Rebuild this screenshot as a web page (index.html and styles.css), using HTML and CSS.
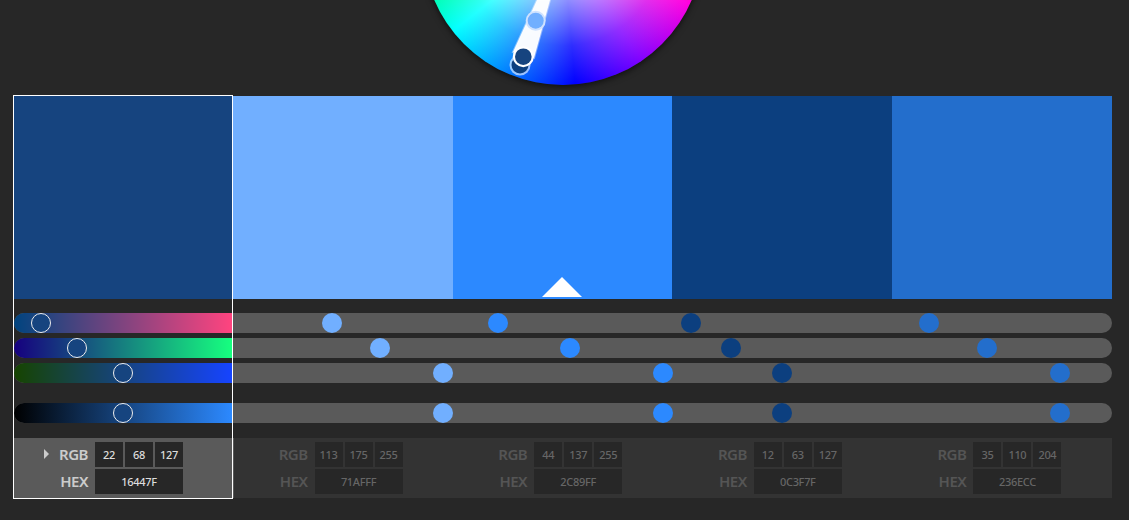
FILE: index.html
```html
<!DOCTYPE html>
<html lang="en">
<head>
    <meta charset="UTF-8">
    <meta name="viewport" content="width=device-width, initial-scale=1.0">
    <title>Color Wheel</title>
    <link rel="stylesheet" href="styles.css">
</head>
<body>
    <div class="wheel-stage">
        <div class="wheel"></div>
        <svg class="wheel-marks" width="1129" height="96" viewBox="0 0 1129 96">
            <polygon points="537,0 550,0 534,58 513,52" fill="#fff" fill-opacity="0.97" stroke="#fff" stroke-opacity="0.4" stroke-width="2"/>
            <circle cx="535.7" cy="20.7" r="10" fill="#cfe2ff"/>
            <circle cx="535.7" cy="20.7" r="8" fill="#71afff"/>
            <circle cx="520" cy="65" r="10.5" fill="#fff" fill-opacity="0.6"/>
            <circle cx="520" cy="65" r="8.5" fill="#0c3f7f"/>
            <circle cx="523.3" cy="56.7" r="10.5" fill="#fff"/>
            <circle cx="523.3" cy="56.7" r="8.3" fill="#16447f"/>
        </svg>
    </div>

    <div class="harmony">
        <div class="selection"></div>

        <div class="swatches">
            <div class="swatch c1"></div>
            <div class="swatch c2"></div>
            <div class="swatch c3"><span class="base-arrow"></span></div>
            <div class="swatch c4"></div>
            <div class="swatch c5"></div>
        </div>

        <div class="sliders">
            <div class="track">
                <div class="ramp ramp-r"></div>
                <span class="dot c1 thumb" style="left: 27px"></span>
                <span class="dot c2" style="left: 318px"></span>
                <span class="dot c3" style="left: 484px"></span>
                <span class="dot c4" style="left: 677px"></span>
                <span class="dot c5" style="left: 915px"></span>
            </div>
            <div class="track">
                <div class="ramp ramp-g"></div>
                <span class="dot c1 thumb" style="left: 63px"></span>
                <span class="dot c2" style="left: 366px"></span>
                <span class="dot c3" style="left: 556px"></span>
                <span class="dot c4" style="left: 717px"></span>
                <span class="dot c5" style="left: 973px"></span>
            </div>
            <div class="track">
                <div class="ramp ramp-b"></div>
                <span class="dot c1 thumb" style="left: 109px"></span>
                <span class="dot c2" style="left: 429px"></span>
                <span class="dot c3" style="left: 649px"></span>
                <span class="dot c4" style="left: 768px"></span>
                <span class="dot c5" style="left: 1046px"></span>
            </div>
            <div class="track track-brightness">
                <div class="ramp ramp-v"></div>
                <span class="dot c1 thumb" style="left: 109px"></span>
                <span class="dot c2" style="left: 429px"></span>
                <span class="dot c3" style="left: 649px"></span>
                <span class="dot c4" style="left: 768px"></span>
                <span class="dot c5" style="left: 1046px"></span>
            </div>
        </div>

        <div class="panels">
            <div class="panel active">
                <span class="label"><i class="caret"></i>RGB</span>
                <span class="value">22</span><span class="value">68</span><span class="value">127</span>
                <span class="label">HEX</span>
                <span class="value hex">16447F</span>
            </div>
            <div class="panel">
                <span class="label">RGB</span>
                <span class="value">113</span><span class="value">175</span><span class="value">255</span>
                <span class="label">HEX</span>
                <span class="value hex">71AFFF</span>
            </div>
            <div class="panel">
                <span class="label">RGB</span>
                <span class="value">44</span><span class="value">137</span><span class="value">255</span>
                <span class="label">HEX</span>
                <span class="value hex">2C89FF</span>
            </div>
            <div class="panel">
                <span class="label">RGB</span>
                <span class="value">12</span><span class="value">63</span><span class="value">127</span>
                <span class="label">HEX</span>
                <span class="value hex">0C3F7F</span>
            </div>
            <div class="panel">
                <span class="label">RGB</span>
                <span class="value">35</span><span class="value">110</span><span class="value">204</span>
                <span class="label">HEX</span>
                <span class="value hex">236ECC</span>
            </div>
        </div>
    </div>
</body>
</html>
```

FILE: styles.css
```css
html, body {
    height: 100%;
}
body {
    background: #272727;
    color: #ccc;
    font-family: "Noto Sans", "Open Sans", sans-serif;
    margin: 0;
    overflow: hidden;
}

/* colour wheel, cut off by the top of the window */
.wheel-stage {
    height: 96px;
    overflow: hidden;
    position: relative;
}
.wheel {
    background:
        radial-gradient(circle closest-side, #fff 0%, rgba(255, 255, 255, 0.55) 40%, rgba(255, 255, 255, 0.18) 72%, rgba(255, 255, 255, 0) 100%),
        conic-gradient(#ffff00 0deg, #ff8000 40deg, #ff0000 80deg, #ff00e0 115deg, #8000ff 146deg, #0000ff 175deg, #0080ff 204deg, #00ffff 232deg, #00ffc0 245deg, #00ff80 262deg, #00ff00 290deg, #80ff00 325deg, #ffff00 360deg);
    border-radius: 50%;
    box-shadow: 0 2px 6px rgba(0, 0, 0, 0.6);
    height: 280px;
    left: 422.5px;
    position: absolute;
    top: -195px;
    width: 280px;
}
.wheel-marks {
    left: 0;
    position: absolute;
    top: 0;
}

.harmony {
    margin-left: 14px;
    position: relative;
    width: 1098px;
}
.selection {
    border: 1px solid #fff;
    height: 402px;
    left: -1px;
    pointer-events: none;
    position: absolute;
    top: -1px;
    width: 218px;
    z-index: 2;
}

.c1 { background: #16447f; }
.c2 { background: #71afff; }
.c3 { background: #2c89ff; }
.c4 { background: #0c3f7f; }
.c5 { background: #236ecc; }

.swatches {
    display: grid;
    grid-template-columns: 219px 220px 219px 220px 220px;
    height: 203px;
}
.swatch {
    align-items: flex-end;
    display: flex;
    justify-content: center;
}
.base-arrow {
    border-bottom: 20px solid #fff;
    border-left: 20px solid transparent;
    border-right: 20px solid transparent;
    height: 0;
    margin-bottom: 2px;
    margin-right: 1px;
    width: 0;
}

.sliders {
    display: flex;
    flex-direction: column;
    gap: 5px;
    margin-top: 14px;
}
.track {
    background: #5a5a5a;
    border-radius: 10px;
    height: 20px;
    position: relative;
}
.track-brightness {
    margin-top: 15px;
}
.ramp {
    border-radius: 10px 0 0 10px;
    height: 100%;
    width: 218px;
}
.ramp-r { background: linear-gradient(to right, #00447f, #ff447f); }
.ramp-g { background: linear-gradient(to right, #16007f, #16ff7f); }
.ramp-b { background: linear-gradient(to right, #164400, #1644ff); }
.ramp-v { background: linear-gradient(to right, #000, #2c89ff); }
.dot {
    border-radius: 50%;
    height: 20px;
    margin-left: -10px;
    position: absolute;
    top: 0;
    width: 20px;
}
.thumb {
    border: 1px solid #eee;
    box-sizing: border-box;
}

.panels {
    background: #333;
    display: grid;
    grid-template-columns: repeat(5, 1fr);
    height: 60px;
    margin-top: 15px;
}
.panel {
    color: #555;
    display: grid;
    gap: 2px;
    grid-template-columns: 74px repeat(3, 28px);
    grid-template-rows: 25px 25px;
    padding-left: 5px;
    padding-top: 4px;
}
.panel.active {
    background: #5a5a5a;
    color: #ccc;
}
.label {
    align-items: center;
    display: flex;
    font-size: 15px;
    font-weight: 600;
    justify-content: flex-end;
    letter-spacing: -0.5px;
    margin-right: 5px;
    padding-bottom: 2px;
}
.caret {
    border-bottom: 5px solid transparent;
    border-left: 5px solid #ccc;
    border-top: 5px solid transparent;
    height: 0;
    margin-right: 10px;
    width: 0;
}
.value {
    align-items: center;
    background: #272727;
    color: #666;
    display: flex;
    font-size: 11px;
    font-weight: 500;
    justify-content: center;
    letter-spacing: -0.3px;
}
.active .value {
    color: #ddd;
}
.hex {
    grid-column: span 3;
}
```
